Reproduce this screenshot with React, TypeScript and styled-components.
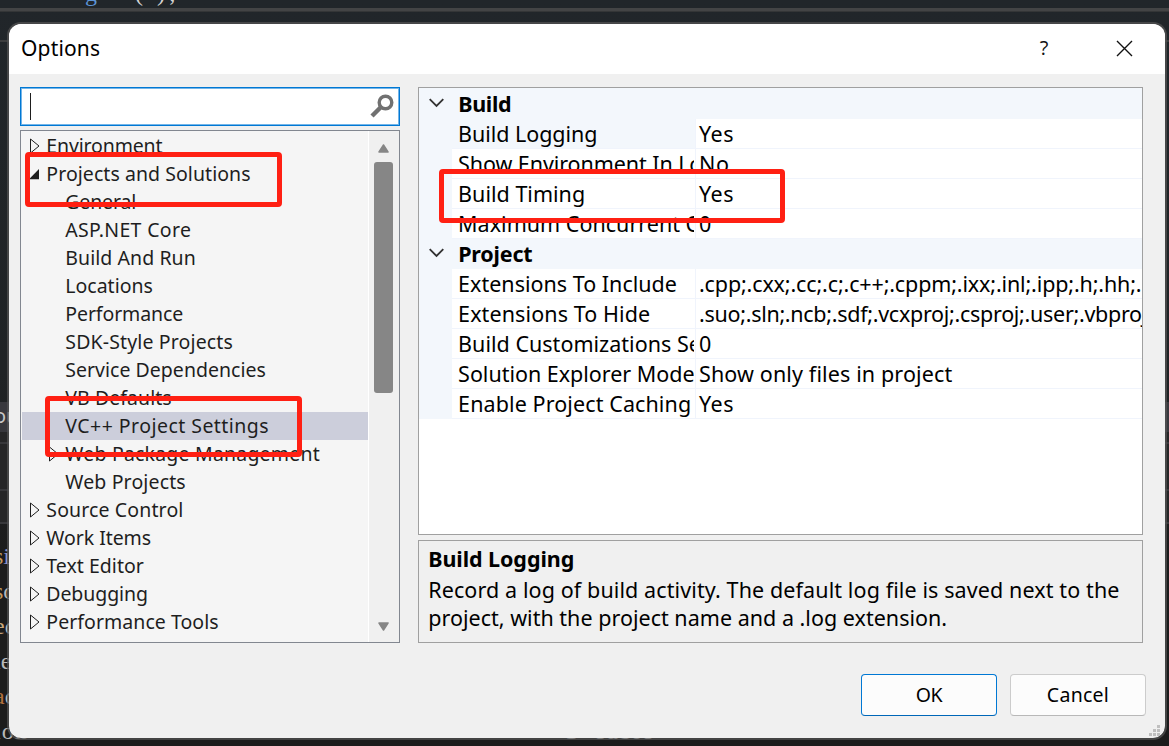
import React from 'react';
import styled, { createGlobalStyle, css } from 'styled-components';

const GlobalStyle = createGlobalStyle`
  * { box-sizing: border-box; }
  body { margin: 0; background: #1e2021; overflow: hidden; }
`;

/* ---------- editor behind the dialog ---------- */

const Desktop = styled.div`
  position: relative;
  width: 1169px;
  height: 746px;
  overflow: hidden;
  padding: 22px 2px 6px 7px;
  background: linear-gradient(#21262a 0, #202325 50%, #1c1c1c 74%, #1c1c1c 100%);
  font-family: 'Noto Sans', 'Open Sans', sans-serif;
`;

const Backdrop = styled.div`
  position: absolute;
  inset: 0;
  display: flex;
  flex-direction: column;
  overflow: hidden;
`;

const Strip = styled.div<{ $height: number; $color?: string }>`
  flex: none;
  height: ${(p) => p.$height}px;
  background: ${(p) => p.$color ?? 'transparent'};
`;

const CodeTop = styled.div`
  display: flex;
  align-items: flex-end;
  gap: 38px;
  flex: none;
  height: 8px;
  padding-left: 85px;
  font: 24px/30px 'Liberation Serif', serif;
`;

const PanelTab = styled.div`
  flex: none;
  height: 30px;
  text-indent: -6px;
  background: #38383d;
  color: #c8c8c8;
  font-size: 20px;
  line-height: 28px;
`;

const CodeList = styled.div`
  display: flex;
  flex-direction: column;
  padding-top: 17px;
`;

const CodeLine = styled.div`
  display: flex;
  height: 35px;
  text-indent: -6px;
  font: 24px/30px 'Liberation Serif', serif;
  white-space: pre;
`;

const Token = styled.span<{ $color: string; $ls?: number }>`
  color: ${(p) => p.$color};
  letter-spacing: ${(p) => p.$ls ?? 0}px;
`;

const TrailingToken = styled(Token)`
  margin-left: auto;
  width: 604px;
  text-indent: 0;
`;

/* ---------- dialog frame ---------- */

const Dialog = styled.section`
  position: relative;
  width: 1160px;
  height: 718px;
  border: 2px solid rgba(84, 84, 84, 0.72);
  border-radius: 14px;
  background: #f0f0f0;
  background-clip: padding-box;
  overflow: hidden;
  display: flex;
  flex-direction: column;
`;

const TitleBar = styled.header`
  display: flex;
  align-items: center;
  flex: none;
  height: 50px;
  padding: 0 32px 0 12px;
  background: #fff;
`;

const Title = styled.h1`
  flex: 1;
  margin: 0;
  padding-bottom: 3px;
  font-size: 21px;
  font-weight: 400;
  line-height: 30px;
  letter-spacing: 0.17px;
  color: #000;
`;

const Help = styled.span`
  width: 12px;
  margin-right: 66px;
  padding-bottom: 2px;
  text-align: center;
  font: 400 20px/24px 'Open Sans', sans-serif;
  color: #111;
`;

const CloseIcon = styled.svg`
  margin-bottom: 2px;
`;

const Body = styled.div`
  display: flex;
  gap: 18px;
  height: 569px;
  padding: 13px 22px 0 11px;
`;

/* ---------- left column ---------- */

const Side = styled.div`
  display: flex;
  flex-direction: column;
  gap: 4px;
  width: 380px;
  flex: none;
`;

const SearchBox = styled.div`
  display: flex;
  align-items: center;
  justify-content: space-between;
  height: 39px;
  padding: 0 5px 1px 8px;
  border: 1px solid #0078d4;
  box-shadow: inset 0 0 0 1px #74b5e8;
  background: #fff;
`;

const Caret = styled.i`
  width: 1px;
  height: 27px;
  margin-left: 1px;
  background: #1e1e1e;
`;

const Tree = styled.div`
  display: flex;
  height: 513px;
  border: 1px solid #828790;
  background: #f5f5f5;
`;

const TreeList = styled.div`
  flex: 1;
  padding: 1px 0 0 1px;
`;

const TreeRow = styled.div<{ $level: number; $selected?: boolean; $ls: number }>`
  display: flex;
  align-items: center;
  height: 28px;
  padding-left: ${(p) => 7 + p.$level * 19}px;
  font-size: 19.5px;
  line-height: 28px;
  letter-spacing: ${(p) => p.$ls}px;
  white-space: pre;
  color: #1e1e1e;
  ${(p) =>
    p.$selected &&
    css`
      background: #cccedb;
    `}
`;

const Toggle = styled.span`
  display: flex;
  width: 17.3px;
  flex: none;
`;

const Scrollbar = styled.div`
  display: flex;
  flex-direction: column;
  align-items: center;
  width: 31px;
  padding: 13px 2px 11px 0;
  border-left: 1px solid #fff;
  background: #f0f0f0;
`;

const Thumb = styled.div`
  width: 19px;
  height: 231px;
  margin-top: 9px;
  margin-bottom: auto;
  border-radius: 3px;
  background: #868686;
`;

/* ---------- right column ---------- */

const Main = styled.div`
  display: flex;
  flex-direction: column;
  gap: 5px;
  width: 725px;
`;

const PropertyGrid = styled.div`
  height: 448px;
  border: 1px solid #a0a0a0;
  background: #fff;
  overflow: hidden;
`;

const GroupHeader = styled.div<{ $first?: boolean; $ls: number }>`
  display: flex;
  align-items: center;
  height: ${(p) => (p.$first ? 31 : 30)}px;
  padding: ${(p) => (p.$first ? 1 : 0)}px 0 0 10px;
  background: #f3f7fc;
  font-size: 21.5px;
  font-weight: 700;
  line-height: 30px;
  letter-spacing: ${(p) => p.$ls}px;
  color: #000;
`;

const Chevron = styled.span`
  display: flex;
  width: 29.2px;
  padding-bottom: 3px;
`;

const PropertyRow = styled.div`
  display: grid;
  grid-template-columns: 33px 244px 446px;
  height: 30px;
  font-size: 21.5px;
  line-height: 29px;
  white-space: pre;
  color: #000;
`;

const Gutter = styled.span`
  background: #f3f7fc;
`;

const Name = styled.span<{ $active?: boolean; $ls: number }>`
  padding-left: 6.1px;
  border-right: 1px solid #f0f4fc;
  border-bottom: 1px solid #f0f4fc;
  background: ${(p) => (p.$active ? '#f3f7fc' : '#fff')};
  letter-spacing: ${(p) => p.$ls}px;
  overflow: hidden;
`;

const NameClip = styled.span`
  display: block;
  width: 235.9px;
  overflow: hidden;
`;

const Value = styled.span<{ $ls: number }>`
  padding-left: 3px;
  border-bottom: 1px solid #f0f4fc;
  letter-spacing: ${(p) => p.$ls}px;
  overflow: hidden;
`;

const Description = styled.div`
  height: 103px;
  padding: 4px 0 0 9.2px;
  border: 1px solid #a0a0a0;
  color: #000;
  font-size: 21.5px;
`;

const DescriptionTitle = styled.h2`
  margin: 0;
  height: 31px;
  font-size: 21.5px;
  font-weight: 700;
  line-height: 28px;
  letter-spacing: -0.07px;
`;

const DescriptionLine = styled.p<{ $ls: number }>`
  margin: 0;
  line-height: 28px;
  white-space: pre;
  letter-spacing: ${(p) => p.$ls}px;
`;

/* ---------- footer ---------- */

const Footer = styled.footer`
  display: flex;
  justify-content: flex-end;
  gap: 13px;
  padding: 31px 19px 0 0;
`;

const Button = styled.button<{ $primary?: boolean }>`
  width: 136px;
  height: 42px;
  padding: 0;
  border: 1px solid ${(p) => (p.$primary ? '#0078d4' : '#cccccc')};
  border-bottom-color: ${(p) => (p.$primary ? '#0067b8' : '#b8b8b8')};
  border-radius: 4px;
  background: #fcfcfc;
  font: 400 19.5px/28px 'Noto Sans', sans-serif;
  letter-spacing: ${(p) => (p.$primary ? -0.5 : 0.27)}px;
  color: #000;
`;

const Grip = styled.div`
  position: absolute;
  right: 5px;
  bottom: 2px;
  display: grid;
  grid-template-columns: repeat(3, 3px);
  gap: 1px;
`;

const GripDot = styled.i<{ $on: boolean }>`
  height: 3px;
  background: ${(p) => (p.$on ? '#bfbfbf' : 'transparent')};
`;

const Highlight = styled.div<{ $x: number; $y: number; $w: number; $h: number }>`
  position: absolute;
  left: ${(p) => p.$x}px;
  top: ${(p) => p.$y}px;
  width: ${(p) => p.$w}px;
  height: ${(p) => p.$h}px;
  border: 5px solid #ff2013;
  border-radius: 4px;
`;

/* ---------- data ---------- */

type Node = { text: string; level: number; ls: number; toggle?: 'open' | 'closed'; selected?: boolean };

const nodes: Node[] = [
  { text: 'Environment', level: 0, ls: -0.14, toggle: 'closed' },
  { text: 'Projects and Solutions', level: 0, ls: 0.06, toggle: 'open' },
  { text: 'General', level: 1, ls: -0.14 },
  { text: 'ASP.NET Core', level: 1, ls: 0.33 },
  { text: 'Build And Run', level: 1, ls: 0.07 },
  { text: 'Locations', level: 1, ls: 0 },
  { text: 'Performance', level: 1, ls: -0.1 },
  { text: 'SDK-Style Projects', level: 1, ls: 0.14 },
  { text: 'Service Dependencies', level: 1, ls: 0.02 },
  { text: 'VB Defaults', level: 1, ls: 0.06 },
  { text: 'VC++ Project Settings', level: 1, ls: 0.46, selected: true },
  { text: 'Web Package Management', level: 1, ls: 0.2, toggle: 'closed' },
  { text: 'Web Projects', level: 1, ls: 0.14 },
  { text: 'Source Control', level: 0, ls: 0.13, toggle: 'closed' },
  { text: 'Work Items', level: 0, ls: -0.05, toggle: 'closed' },
  { text: 'Text Editor', level: 0, ls: 0.03, toggle: 'closed' },
  { text: 'Debugging', level: 0, ls: -0.08, toggle: 'closed' },
  { text: 'Performance Tools', level: 0, ls: 0.05, toggle: 'closed' },
];

type Property = { name: string; value: string; ls: number; vls: number; active?: boolean };

const buildProps: Property[] = [
  { name: 'Build Logging', value: 'Yes', ls: -0.05, vls: 0.5, active: true },
  { name: 'Show Environment In Log', value: 'No', ls: -0.08, vls: 0.6 },
  { name: 'Build Timing', value: 'Yes', ls: 0.02, vls: 0.5 },
  { name: 'Maximum Concurrent C++ Compilations', value: '0', ls: 0.02, vls: 0 },
];

const projectProps: Property[] = [
  { name: 'Extensions To Include', value: '.cpp;.cxx;.cc;.c;.c++;.cppm;.ixx;.inl;.ipp;.h;.hh;.hpp', ls: 0.01, vls: -0.14 },
  { name: 'Extensions To Hide', value: '.suo;.sln;.ncb;.sdf;.vcxproj;.csproj;.user;.vbproj;', ls: 0.1, vls: -0.29 },
  { name: 'Build Customizations Search', value: '0', ls: 0.02, vls: 0 },
  { name: 'Solution Explorer Mode', value: 'Show only files in project', ls: -0.02, vls: 0.13 },
  { name: 'Enable Project Caching', value: 'Yes', ls: 0.1, vls: 0.5 },
];

const codeLines: [string, string][][] = [
  [['s', '#c69a5d'], ['i', '#8d93c8']],
  [['s', '#c69a5d'], ['o', '#b8b8b8']],
  [['e', '#c8a87c'], ['c', '#b8b8b8']],
  [['l', '#c8a87c'], ['e', '#b8b8b8']],
  [['a', '#b0703c'], ['c', '#b8b8b8']],
];

/* ---------- parts ---------- */

function ToggleIcon({ state }: { state?: 'open' | 'closed' }) {
  return (
    <Toggle>
      {state === 'closed' && (
        <svg width="12" height="16" viewBox="0 0 12 16">
          <path d="M1.5 1v14L10 8z" fill="none" stroke="#1e1e1e" strokeWidth="1" />
        </svg>
      )}
      {state === 'open' && (
        <svg width="12" height="16" viewBox="0 0 12 16">
          <path d="M10 3v10.3H0z" fill="#1e1e1e" />
        </svg>
      )}
    </Toggle>
  );
}

function ChevronIcon() {
  return (
    <Chevron>
      <svg width="15" height="10" viewBox="0 0 15 10">
        <path d="M.7 1.2 7.5 8l6.8-6.8" fill="none" stroke="#333" strokeWidth="1.8" />
      </svg>
    </Chevron>
  );
}

function Row({ p }: { p: Property }) {
  return (
    <PropertyRow>
      <Gutter />
      <Name $active={p.active} $ls={p.ls}>
        <NameClip>{p.name}</NameClip>
      </Name>
      <Value $ls={p.vls}>{p.value}</Value>
    </PropertyRow>
  );
}

export default function App() {
  return (
    <Desktop>
      <GlobalStyle />
      <Backdrop>
        <CodeTop>
          <Token $color="#5c94d6">g</Token>
          <Token $color="#d4d4d4" $ls={4}>( );</Token>
        </CodeTop>
        <Strip $height={3} $color="#434445" />
        <Strip $height={1} $color="#343637" />
        <Strip $height={28} />
        <Strip $height={2} $color="#3c3d3e" />
        <Strip $height={360} />
        <PanelTab>ou</PanelTab>
        <Strip $height={10} $color="#262627" />
        <Strip $height={2} $color="#38383b" />
        <Strip $height={45} $color="#262627" />
        <Strip $height={2} $color="#38383b" />
        <Strip $height={31} $color="#262627" />
        <Strip $height={2} $color="#38383b" />
        <CodeList>
          {codeLines.map((line, i) => (
            <CodeLine key={i}>
              <Token $color={line[0][1]}>
                {line[0][0]}
                <Token $color={line[1][1]}>{line[1][0]}</Token>
              </Token>
            </CodeLine>
          ))}
          <CodeLine>
            <Token $color="#b8b8b8" $ls={1}>ion</Token>
            <TrailingToken $color="#d8d8d8" $ls={1.6}>1  cubic</TrailingToken>
          </CodeLine>
        </CodeList>
      </Backdrop>
      <Dialog>
        <TitleBar>
          <Title>Options</Title>
          <Help>?</Help>
          <CloseIcon width="17" height="17" viewBox="0 0 17 17">
            <path d="M1 1l15 15M16 1L1 16" stroke="#111" strokeWidth="1.4" fill="none" />
          </CloseIcon>
        </TitleBar>
        <Body>
          <Side>
            <SearchBox>
              <Caret />
              <svg width="24" height="24" viewBox="0 0 24 24" fill="none" stroke="#717171">
                <circle cx="15.5" cy="8.5" r="6.3" strokeWidth="3.4" />
                <path d="M11 13 2 22" strokeWidth="4.4" />
              </svg>
            </SearchBox>
            <Tree>
              <TreeList>
                {nodes.map((n) => (
                  <TreeRow key={n.text} $level={n.level} $selected={n.selected} $ls={n.ls}>
                    <ToggleIcon state={n.toggle} />
                    {n.text}
                  </TreeRow>
                ))}
              </TreeList>
              <Scrollbar>
                <svg width="11" height="9" viewBox="0 0 11 9">
                  <path d="M5.5 1 10 8H1z" fill="#868686" stroke="#868686" strokeWidth="1.5" strokeLinejoin="round" />
                </svg>
                <Thumb />
                <svg width="11" height="9" viewBox="0 0 11 9">
                  <path d="M5.5 8 10 1H1z" fill="#868686" stroke="#868686" strokeWidth="1.5" strokeLinejoin="round" />
                </svg>
              </Scrollbar>
            </Tree>
          </Side>
          <Main>
            <PropertyGrid>
              <GroupHeader $first $ls={-0.3}>
                <ChevronIcon />
                Build
              </GroupHeader>
              {buildProps.map((p) => (
                <Row key={p.name} p={p} />
              ))}
              <GroupHeader $ls={-0.2}>
                <ChevronIcon />
                Project
              </GroupHeader>
              {projectProps.map((p) => (
                <Row key={p.name} p={p} />
              ))}
            </PropertyGrid>
            <Description>
              <DescriptionTitle>Build Logging</DescriptionTitle>
              <DescriptionLine $ls={0.11}>
                Record a log of build activity. The default log file is saved next to the
              </DescriptionLine>
              <DescriptionLine $ls={0.02}>project, with the project name and a .log extension.</DescriptionLine>
            </Description>
          </Main>
        </Body>
        <Footer>
          <Button $primary>OK</Button>
          <Button>Cancel</Button>
        </Footer>
        <Grip>
          {[0, 0, 1, 0, 1, 1, 1, 1, 1].map((on, i) => (
            <GripDot key={i} $on={on === 1} />
          ))}
        </Grip>
      </Dialog>
      <Highlight $x={25} $y={152} $w={257} $h={55} />
      <Highlight $x={45} $y={396} $w={257} $h={61} />
      <Highlight $x={439} $y={169} $w={346} $h={54} />
    </Desktop>
  );
}
